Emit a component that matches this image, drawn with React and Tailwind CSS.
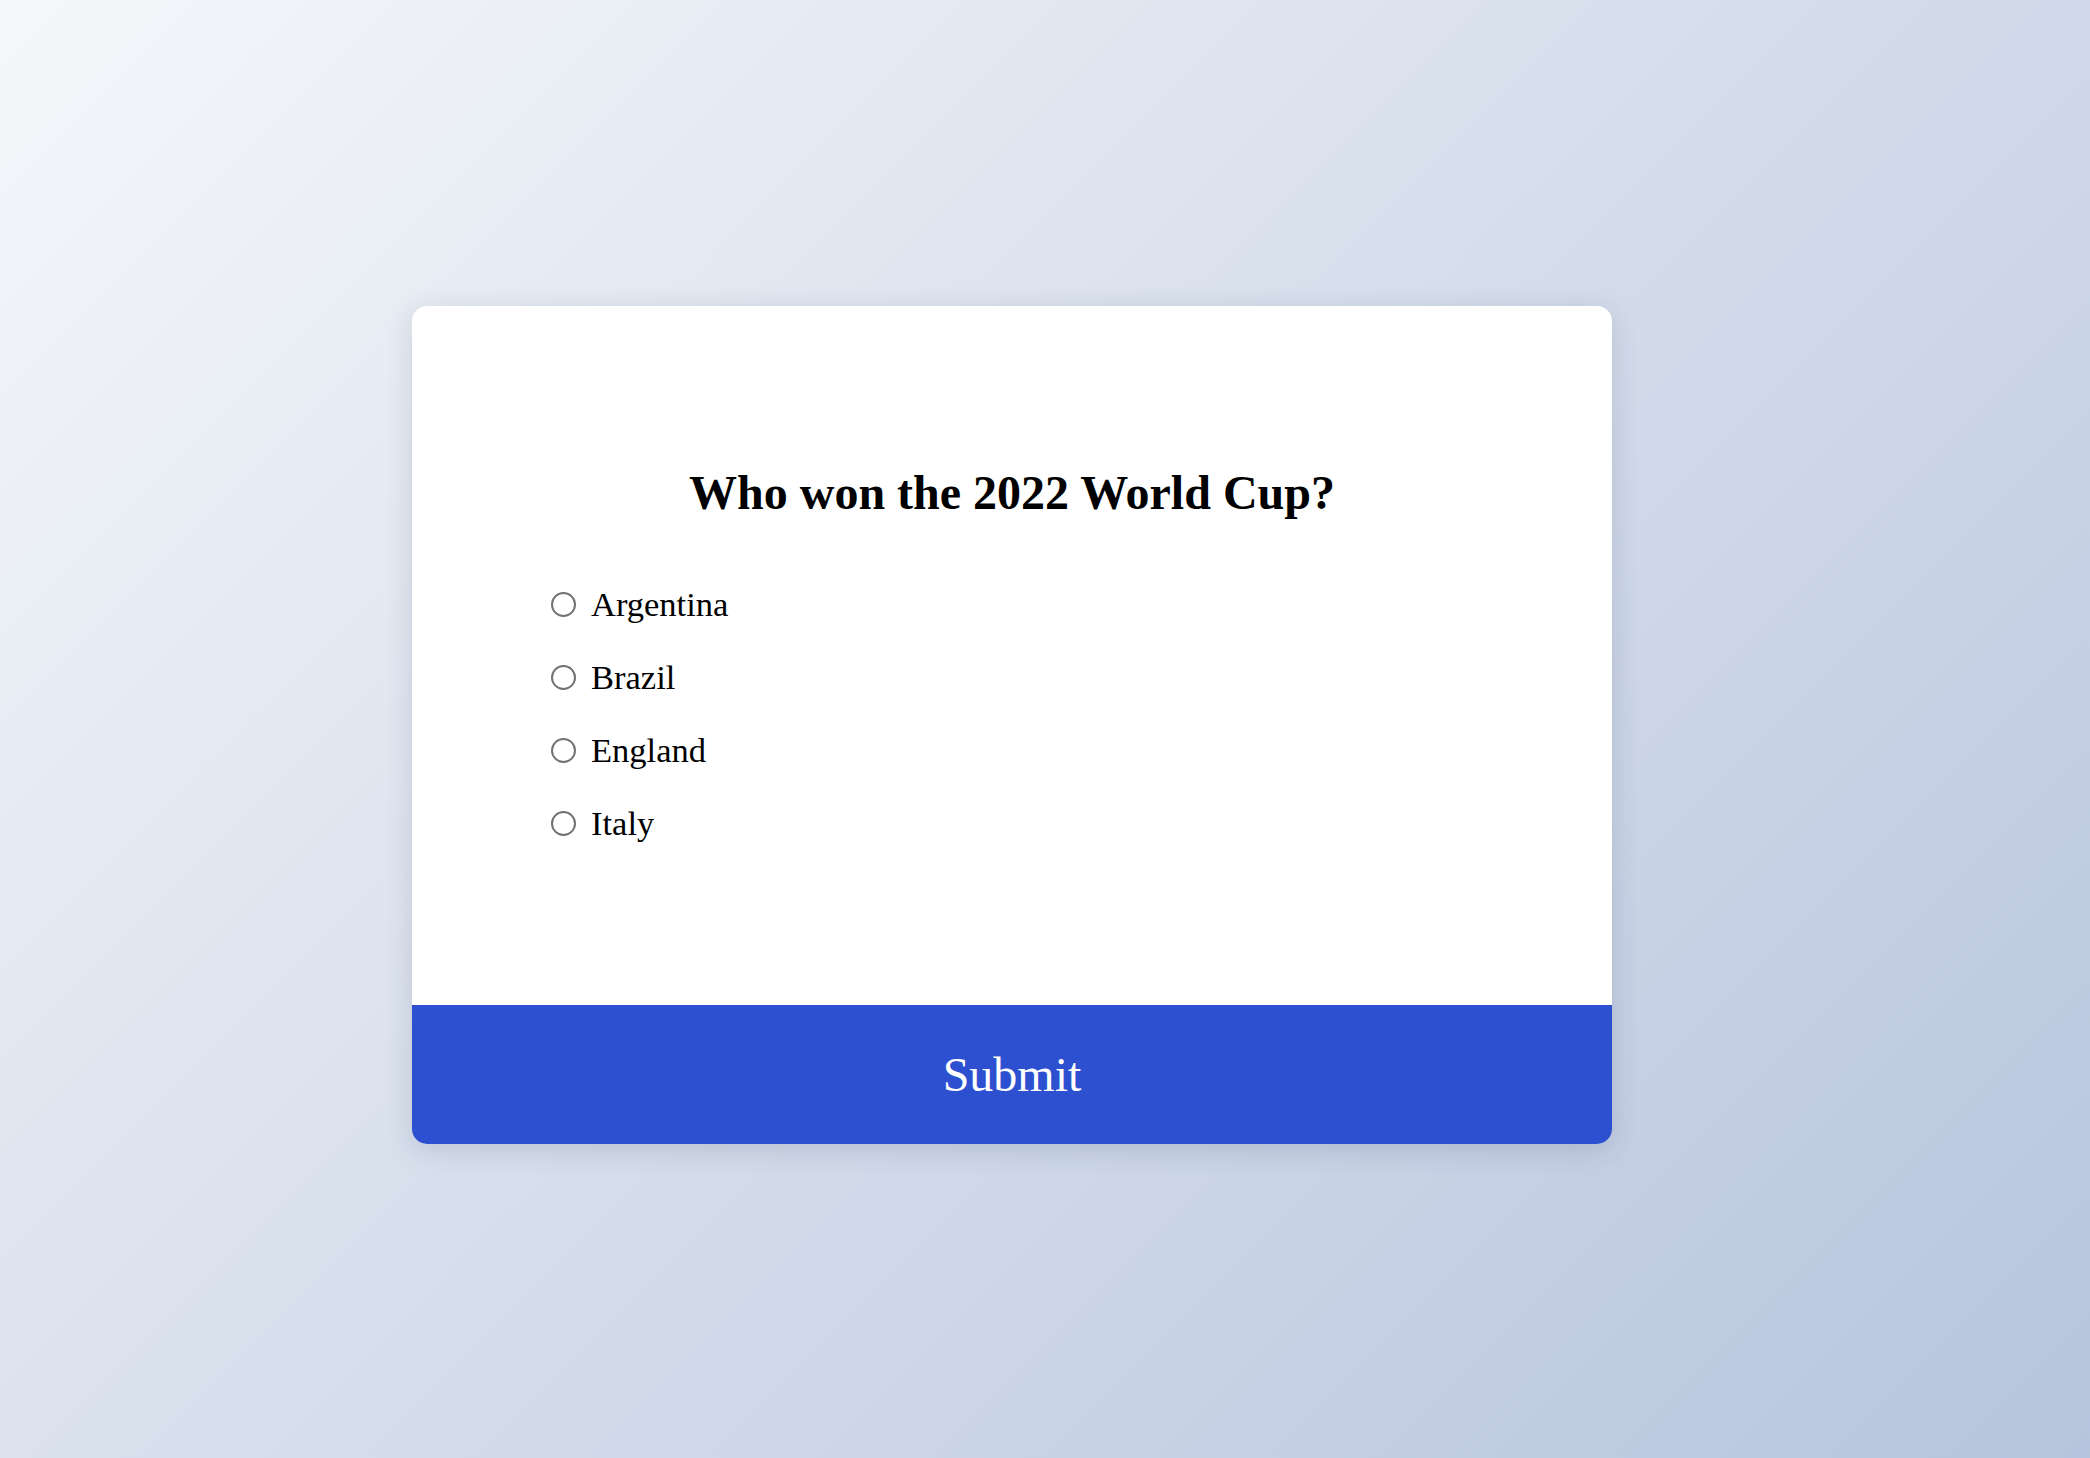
import React, { useState } from 'react';

const options = ['Argentina', 'Brazil', 'England', 'Italy'];

const App = () => {
    const [picked, setPicked] = useState(null);

    return (
        <div className="min-h-screen w-full flex items-center justify-center pr-[66px] pb-[8px] bg-[linear-gradient(135deg,#f5f7fa_0%,#b6c4dd_100%)] font-['Liberation_Serif','Times_New_Roman',serif]">
            <div className="w-[1200px] bg-white rounded-[15px] overflow-hidden shadow-[0_6px_28px_rgba(40,50,80,0.16)]">
                {/* Question */}
                <div className="h-[699px] pt-[159px] px-[139px]">
                    <h2 className="text-center text-[48px] font-bold leading-[55px] text-black">
                        Who won the 2022 World Cup?
                    </h2>
                    <div className="mt-[48px] flex flex-col">
                        {options.map((opt) => (
                            <label key={opt} className="h-[73px] flex items-center gap-[15px] cursor-pointer">
                                <span
                                    onClick={() => setPicked(opt)}
                                    className="w-[25px] h-[25px] rounded-full border-2 border-[#727272] flex items-center justify-center"
                                >
                                    {picked === opt && <span className="w-3 h-3 rounded-full bg-[#2c50cf]" />}
                                </span>
                                <span onClick={() => setPicked(opt)} className="text-[34.5px] leading-none text-black">
                                    {opt}
                                </span>
                            </label>
                        ))}
                    </div>
                </div>

                {/* Submit */}
                <button className="w-full h-[139px] bg-[#2c50cf] text-white text-[48px] flex items-center justify-center">
                    Submit
                </button>
            </div>
        </div>
    );
};

export default App;
